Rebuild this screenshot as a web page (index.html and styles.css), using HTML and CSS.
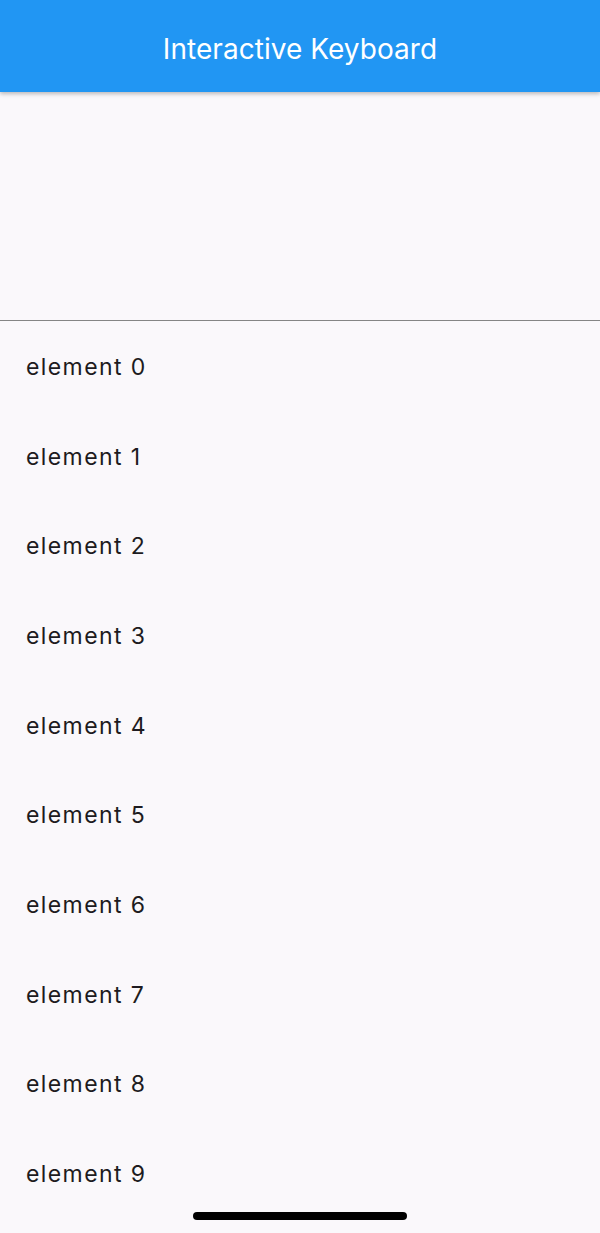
FILE: index.html
```html
<!DOCTYPE html>
<html>
<head>
<meta charset="utf-8">
<link rel="stylesheet" href="styles.css">
</head>
<body>
<div class="screen">
  <header class="appbar"><h1 class="title">Interactive Keyboard</h1></header>
  <div class="input-area"></div>
  <ul class="list">
    <li class="item">element 0</li>
    <li class="item">element 1</li>
    <li class="item">element 2</li>
    <li class="item">element 3</li>
    <li class="item">element 4</li>
    <li class="item">element 5</li>
    <li class="item">element 6</li>
    <li class="item">element 7</li>
    <li class="item">element 8</li>
    <li class="item">element 9</li>
  </ul>
  <div class="home-indicator"></div>
</div>
</body>
</html>
```
FILE: styles.css
```css
html, body {
  margin: 0;
  padding: 0;
  background: #faf8fb;
}
.screen {
  position: relative;
  width: 600px;
  height: 1233px;
  overflow: hidden;
  background: #faf8fb;
  font-family: Inter, "Noto Sans", sans-serif;
}
.appbar {
  position: relative;
  z-index: 2;
  height: 92px;
  background: #2196f3;
  display: flex;
  align-items: center;
  justify-content: center;
  box-shadow: 0 2px 4px rgba(0,0,0,0.25);
}
.title {
  margin: 0;
  color: #fff;
  font-size: 28px;
  font-weight: 400;
  letter-spacing: 0.05px;
  padding-top: 5px;
}
.input-area {
  height: 228px;
  border-bottom: 1px solid #858585;
}
.list {
  list-style: none;
  margin: 0;
  padding: 0;
}
.item {
  height: 89.7px;
  display: flex;
  align-items: center;
  padding-left: 26px;
  font-family: Inter, sans-serif;
  font-size: 23px;
  color: #1d1b20;
  letter-spacing: 1.4px;
  padding-top: 2px;
  box-sizing: border-box;
}
.home-indicator {
  position: absolute;
  left: 193px;
  top: 1212px;
  width: 214px;
  height: 8px;
  border-radius: 4px;
  background: #000;
}
```
